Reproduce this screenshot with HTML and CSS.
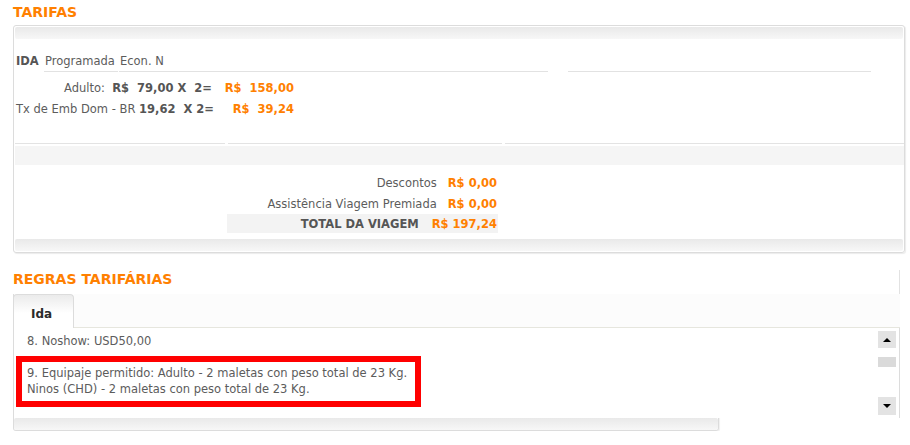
FILE: index.html
```html
<!DOCTYPE html>
<html lang="pt-BR">
<head>
<meta charset="utf-8">
<title>Tarifas</title>
<link rel="stylesheet" href="styles.css">
</head>
<body>
<h2 class="title">TARIFAS</h2>
<div class="fare-box">
  <div class="bar bar-top"></div>
  <div class="ida-row">
    <span class="ida-label">IDA</span>
    <span class="cell cell-class">Programada</span>
    <span class="cell cell-econ">Econ. N</span>
    <span class="cell cell-empty"></span>
  </div>
  <div class="fare-grid">
    <div class="fare-desc">Adulto:&nbsp; <b>R$&nbsp; 79,00 X&nbsp; 2=</b></div>
    <div class="fare-total">R$&nbsp; 158,00</div>
    <div class="fare-desc">Tx de Emb Dom - BR <b>19,62&nbsp; X 2=</b></div>
    <div class="fare-total">R$&nbsp; 39,24</div>
  </div>
  <div class="seg-row">
    <span class="seg seg-a"></span>
    <span class="seg seg-b"></span>
    <span class="seg seg-c"></span>
  </div>
  <div class="band"></div>
  <div class="summary">
    <div class="sum-row"><span class="sum-label">Descontos</span><span class="sum-value">R$ 0,00</span></div>
    <div class="sum-row"><span class="sum-label">Assistência Viagem Premiada</span><span class="sum-value">R$ 0,00</span></div>
    <div class="sum-row sum-total"><span class="sum-label">TOTAL DA VIAGEM</span><span class="sum-value">R$ 197,24</span></div>
  </div>
  <div class="bar bar-bottom"></div>
</div>

<h2 class="title title-rules">REGRAS TARIFÁRIAS</h2>
<div class="rules-box">
  <div class="tabs">
    <div class="tab">Ida</div>
    <div class="tab-fill"></div>
  </div>
  <div class="rules-content">
    <div class="rules-text">
      <p class="rule">8. Noshow: USD50,00</p>
      <div class="highlight">
        <p class="rule-line">9. Equipaje permitido: Adulto - 2 maletas con peso total de 23 Kg.</p>
        <p class="rule-line">Ninos (CHD) - 2 maletas con peso total de 23 Kg.</p>
      </div>
    </div>
    <div class="scrollbar">
      <div class="sb-btn sb-up"><span class="tri tri-up"></span></div>
      <div class="sb-thumb"></div>
      <div class="sb-btn sb-down"><span class="tri tri-down"></span></div>
    </div>
  </div>
  <div class="bar bar-rules"></div>
</div>
</body>
</html>
```

FILE: styles.css
```css
* { box-sizing: border-box; }

body {
  margin: 0;
  background: #fff;
  font-family: "DejaVu Sans", Verdana, sans-serif;
  font-size: 11.5px;
  color: #5c5c5c;
}

.title {
  margin: 0;
  padding: 4px 0 0 13px;
  font-size: 14px;
  line-height: 17px;
  font-weight: bold;
  color: #ff8000;
}

/* ---------- Tarifas box ---------- */
.fare-box {
  margin: 4px 0 0 13px;
  width: 892px;
  border: 1px solid #dcdcdc;
  border-radius: 3px;
  box-shadow: 1px 1px 1px rgba(0, 0, 0, 0.08);
}

.bar {
  height: 12px;
  border-radius: 2px;
  background: linear-gradient(#e9e9e9, #f7f7f7);
}

.bar-top { margin: 1px 1px 0 1px; }
.bar-bottom { margin: 6px 1px 1px 1px; }

.ida-row {
  display: flex;
  margin-top: 14px;
  padding-left: 2px;
  line-height: 16px;
}

.ida-label {
  width: 28px;
  font-weight: bold;
  color: #555;
}

.cell {
  height: 19px;
  padding-bottom: 2px;
  border-bottom: 1px solid #e2e2e2;
}

.cell-class { width: 74px; padding-left: 1px; }
.cell-econ { width: 429px; margin-left: 1px; padding-left: 1px; }
.cell-empty { width: 303px; margin-left: 20px; }

.fare-grid {
  display: grid;
  grid-template-columns: 196px 82px;
  grid-auto-rows: 21px;
  align-items: center;
  margin: 5px 0 0 2px;
  line-height: 16px;
}

.fare-desc { text-align: right; white-space: nowrap; }
.fare-desc b { color: #555; }

.fare-total {
  text-align: right;
  font-weight: bold;
  color: #ff8000;
  white-space: nowrap;
}

.seg-row {
  display: flex;
  gap: 3px;
  margin-left: 1px;
}

.seg {
  height: 25px;
  border-bottom: 1px solid #e3e3e3;
}

.seg-a { width: 210px; }
.seg-b { width: 274px; }
.seg-c { flex: 1; }

.band {
  height: 19px;
  margin: 2px 0 0 1px;
  background: #f5f5f5;
}

.summary {
  margin: 7px 0 0 213px;
  width: 271px;
}

.sum-row {
  display: flex;
  justify-content: flex-end;
  align-items: center;
  gap: 11px;
  height: 21px;
  padding-right: 1px;
  white-space: nowrap;
}

.sum-label { color: #5c5c5c; }

.sum-value {
  font-weight: bold;
  color: #ff8000;
}

.sum-total {
  height: 19px;
  gap: 13px;
  background: #f3f3f3;
}

.sum-total .sum-label {
  font-weight: bold;
  color: #555;
}

/* ---------- Regras tarifárias ---------- */
.title-rules {
  margin: 17px 0 0 13px;
  padding: 1px 0 6px 0;
  width: 887px;
  border-right: 1px solid #e2e2e2;
}

.rules-box {
  margin-left: 13px;
  width: 706px;
  border: 1px solid #dcdcdc;
  border-top: none;
  border-radius: 0 0 3px 3px;
  box-shadow: 1px 1px 1px rgba(0, 0, 0, 0.06);
}

.tabs {
  display: flex;
  margin-left: -1px;
  width: 887px;
  height: 34px;
}

.tab {
  width: 61px;
  height: 34px;
  padding: 11px 0 0 17px;
  border: 1px solid #dcdcdc;
  border-bottom: none;
  border-radius: 4px 4px 0 0;
  background: linear-gradient(#ebebeb, #fff 55%);
  font-size: 12px;
  line-height: 16px;
  font-weight: bold;
  color: #2b2b2b;
}

.tab-fill {
  flex: 1;
  height: 34px;
  background: #fcfcfc;
  border-bottom: 1px solid #e6e6de;
}

.rules-content {
  display: flex;
  width: 886px;
  height: 90px;
  overflow: hidden;
  background: #fff;
  border-right: 1px solid #dcdcdc;
}

.rules-text {
  flex: 1;
  padding: 5px 0 0 2px;
  line-height: 16px;
}

.rule {
  margin: 0;
  padding-left: 11px;
}

.highlight {
  margin-top: 7px;
  width: 405px;
  padding: 3px 0 4px 5px;
  border: 6px solid #ff0000;
  background: #fff;
}

.rule-line {
  margin: 0;
  white-space: nowrap;
}

.scrollbar {
  display: flex;
  flex-direction: column;
  width: 18px;
  margin-right: 3px;
}

.sb-btn {
  display: flex;
  align-items: center;
  justify-content: center;
  background: #e3e3e3;
}

.sb-up { margin-top: 3px; height: 17px; }
.sb-down { margin-top: auto; margin-bottom: 3px; height: 18px; }

.sb-thumb {
  margin-top: 9px;
  height: 10px;
  background: #dadada;
}

.tri {
  width: 0;
  height: 0;
  border-left: 4px solid transparent;
  border-right: 4px solid transparent;
}

.tri-up { border-bottom: 4px solid #000; }
.tri-down { border-top: 4px solid #000; }

.bar-rules {
  height: 12px;
  margin: 0;
}
```
